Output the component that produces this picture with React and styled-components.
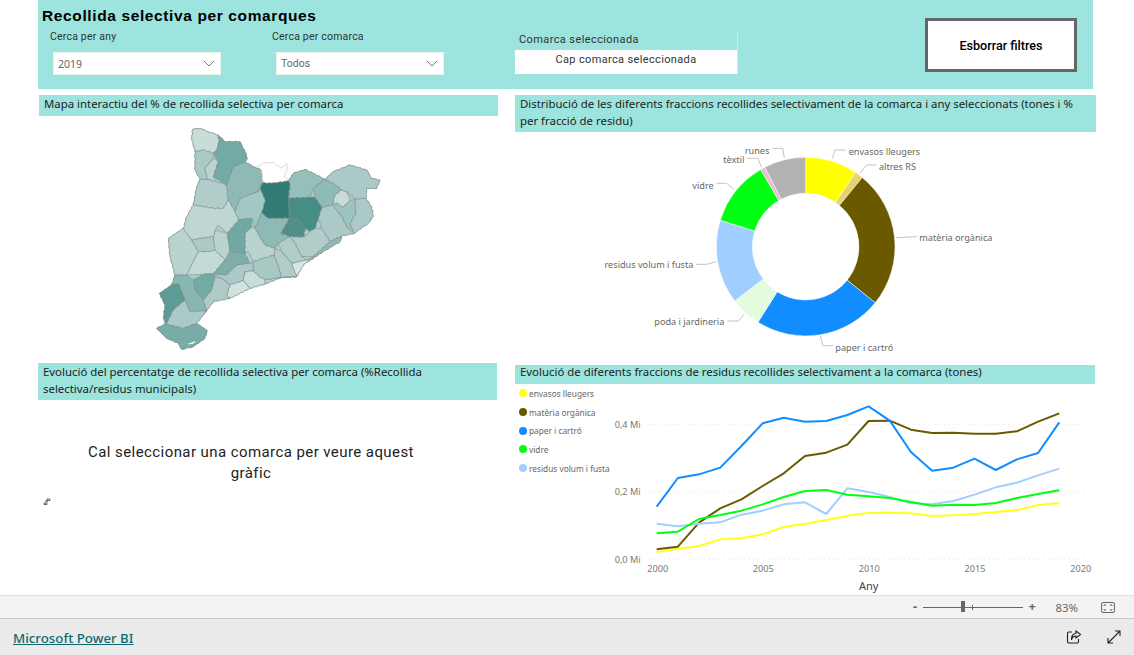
import React from 'react'
import styled, { createGlobalStyle } from 'styled-components'

const GlobalStyle = createGlobalStyle`
  html, body { margin: 0; padding: 0; background: #fff; }
  body { font-family: "Noto Sans", "Open Sans", sans-serif; overflow: hidden; }
`

const TEAL = '#9ce4dd'
const UI_FONT = '"Noto Sans", "Open Sans", sans-serif'
const DIN_FONT = 'Roboto, "Noto Sans", sans-serif'

const Page = styled.div`
  width: 1134px;
  height: 655px;
  display: flex;
  flex-direction: column;
  overflow: hidden;
`

const Canvas = styled.main`
  height: 595px;
  flex: none;
  padding-left: 38px;
  display: grid;
  grid-template-columns: 460px 595px;
  grid-template-rows: 89px 268px 238px;
  box-sizing: border-box;
`

const Banner = styled.header`
  grid-column: 1 / 3;
  background: ${TEAL};
  display: flex;
  flex-direction: column;
  position: relative;
`

const BannerTitle = styled.h1`
  margin: 6px 0 0 4px;
  font: bold 15.5px/20px "Liberation Sans", Arial, sans-serif;
  letter-spacing: 0.62px;
  color: #000;
`

const Filters = styled.div`
  display: flex;
  margin-top: 3px;
`

const Slicer = styled.div`
  width: 222px;
  padding-left: ${p => p.$inset}px;
  box-sizing: border-box;
`

const SlicerLabel = styled.div`
  font: 10.5px/16px ${DIN_FONT};
  letter-spacing: 0.2px;
  color: #333;
  margin-left: ${p => p.$shift}px;
`

const Dropdown = styled.div`
  width: ${p => p.$width}px;
  height: 23px;
  margin-top: 7px;
  background: #fff;
  border: 1px solid #e9f3f1;
  box-sizing: border-box;
  display: flex;
  align-items: center;
  justify-content: space-between;
  padding: 0 5px 0 4px;
  font: 10.5px ${p => p.$din ? DIN_FONT : UI_FONT};
  color: #666;
`

const SelectedCard = styled.div`
  position: absolute;
  left: 477px;
  top: 31px;
  width: 222px;
  border-right: 1px solid #c4ece8;
`

const SelectedLabel = styled.div`
  font: 11px/18px ${DIN_FONT};
  letter-spacing: 0.4px;
  color: #333;
  padding: 0 0 1px 4px;
`

const SelectedValue = styled.div`
  height: 24px;
  padding-bottom: 5px;
  box-sizing: border-box;
  background: #fff;
  font: 11px/19px ${DIN_FONT};
  letter-spacing: 0.35px;
  color: #333;
  text-align: center;
`

const ClearButton = styled.button`
  position: absolute;
  left: 887px;
  top: 18px;
  width: 152px;
  height: 54px;
  box-sizing: border-box;
  background: #fff;
  border: 3px solid #666;
  outline: none;
  padding: 0;
  font: 500 12.6px ${DIN_FONT};
  color: #000;
`

const Panel = styled.section`
  display: flex;
  flex-direction: column;
  min-width: 0;
`

const VisualTitle = styled.h2`
  margin: ${p => p.$top}px 0 0 ${p => p.$left || 0}px;
  width: ${p => p.$width}px;
  height: ${p => p.$height}px;
  flex: none;
  box-sizing: border-box;
  padding: 0 4px 0 5px;
  background: ${TEAL};
  font: 400 11.4px/${p => p.$lead || 17}px ${UI_FONT};
  color: #222;
`

const MapSvg = styled.svg`
  width: 240px;
  height: 235px;
  margin: 4px 0 0 112px;
  flex: none;
`

const DonutSvg = styled.svg`
  width: 420px;
  height: 225px;
  margin: 3px 0 0 92px;
  flex: none;
  text { font-family: ${UI_FONT}; font-size: 27.4px; fill: #666; }
  polyline { fill: none; stroke: #c4c4c4; stroke-width: 3; }
`

const Notice = styled.div`
  width: 340px;
  margin: 42px 0 0 43px;
  font: 15px/21px ${DIN_FONT};
  letter-spacing: 0.42px;
  color: #222;
  text-align: center;
`

const TinyGlyph = styled.svg`
  width: 8px;
  height: 7px;
  margin: 14px 0 0 5px;
  flex: none;
`

const ChartRow = styled.div`
  display: flex;
  height: 212px;
  padding-left: 17px;
`

const Legend = styled.ul`
  list-style: none;
  margin: 0;
  padding: 0 0 0 4px;
  width: 91px;
  flex: none;
`

const LegendItem = styled.li`
  height: 18.7px;
  display: flex;
  align-items: center;
  font: 8.3px ${UI_FONT};
  color: #666;
  white-space: nowrap;
`

const Dot = styled.span`
  width: 8px;
  height: 8px;
  border-radius: 50%;
  background: ${p => p.$color};
  margin-right: 2px;
  flex: none;
`

const LineSvg = styled.svg`
  width: 486px;
  height: 212px;
  flex: none;
  text { font-family: ${UI_FONT}; font-size: 27.5px; fill: #777; }
`

const ZoomBar = styled.div`
  height: 24px;
  flex: none;
  box-sizing: border-box;
  background: #f3f3f3;
  border-top: 1px solid #e2e2e2;
  border-bottom: 1px solid #c8c8c8;
  display: flex;
  align-items: center;
  justify-content: flex-end;
  padding-right: 19px;
  color: #666;
`

const ZoomSign = styled.span`
  font: bold 13px/14px ${UI_FONT};
  color: #666;
  width: 7px;
  text-align: center;
  margin-top: -2px;
`

const Slider = styled.div`
  position: relative;
  width: 100px;
  height: 1px;
  margin: 0 6px 0 4px;
  background: #666;
`

const Thumb = styled.i`
  position: absolute;
  left: 38px;
  top: -6px;
  width: 4px;
  height: 11px;
  background: #666;
`

const Tick = styled.i`
  position: absolute;
  left: 49px;
  top: -2px;
  width: 1px;
  height: 5px;
  background: #666;
`

const Percent = styled.span`
  font: 11.4px ${UI_FONT};
  color: #666;
  margin: 0 23px 0 20px;
`

const Footer = styled.footer`
  flex: 1;
  background: #eaeaea;
  display: flex;
  align-items: center;
  padding: 2px 12px 0 13px;
`

const BrandLink = styled.a`
  font: 500 13.3px ${UI_FONT};
  color: #0b6a70;
  text-decoration: underline;
  flex: 1;
`

const FooterIcon = styled.svg`
  width: 16px;
  height: 16px;
  margin: -2px 0 0 ${p => p.$gap || 0}px;
  flex: none;
`

const outline = '128,28 150,25 175,35 205,45 225,65 270,65 285,95 292,115 285,125 320,145 335,150 338,188 365,190 415,183 430,160 465,148 490,160 525,178 550,155 600,135 650,150 665,175 690,180 680,205 650,205 648,235 665,260 670,290 655,310 612,340 575,348 570,365 520,395 475,425 462,432 440,470 395,472 345,492 300,505 240,535 190,545 160,585 140,610 172,632 165,655 130,680 95,688 85,670 50,655 20,625 45,612 40,595 45,555 28,520 65,495 75,465 60,410 55,355 100,325 110,290 130,255 140,200 150,178 135,150 135,95 125,55'

const comarques = [
  ['#c8dcd8', '128,28 150,25 175,35 205,45 207,65 200,90 190,100 160,90 135,95 125,55'],
  ['#a9cac6', '135,95 160,90 190,100 190,115 165,145 172,178 150,178 135,150'],
  ['#bad5d1', '190,115 205,125 190,170 200,185 172,178 165,145'],
  ['#72aaa5', '205,45 225,65 270,65 285,95 292,115 285,125 250,140 230,195 190,170 205,125 190,100 200,90 207,65'],
  ['#b0cdc9', '150,178 172,178 200,185 230,195 235,240 220,265 190,265 130,255 140,200'],
  ['#8fb9b5', '285,125 320,145 335,150 338,188 328,205 325,215 270,235 255,275 235,240 230,195 250,140'],
  ['#ffffff', '320,140 345,128 370,128 395,145 410,130 412,145 403,170 415,183 365,190 338,188 335,150'],
  ['#96beba', '430,160 465,148 490,160 525,178 490,205 480,232 415,235 420,195 415,183'],
  ['#abcac7', '525,178 550,155 600,135 650,150 665,175 690,180 680,205 650,205 648,235 615,238 590,215 575,210 550,190'],
  ['#8fbab6', '490,205 525,178 550,190 575,210 555,225 548,255 515,262 495,232'],
  ['#c8dcd8', '555,225 575,210 590,215 600,240 580,262 560,250 548,255'],
  ['#9dc3bf', '548,255 560,250 580,262 600,240 615,238 617,280 600,310 612,340 590,320 575,290'],
  ['#abcac7', '615,238 648,235 665,260 670,290 655,310 612,340 600,310 617,280'],
  ['#abcac7', '515,262 548,255 575,290 590,320 612,340 575,348 540,365 515,325 505,295'],
  ['#478d85', '415,235 480,232 495,232 515,262 505,295 495,325 480,335 465,325 445,300 418,295'],
  ['#317c74', '330,205 338,188 365,190 415,183 420,195 415,235 418,295 385,295 355,295 335,280 345,240'],
  ['#4f8f88', '418,295 445,300 465,325 462,352 420,350 392,340'],
  ['#a3c7c3', '270,235 325,215 330,205 345,240 335,280 315,325 305,295 265,300 255,275'],
  ['#8fb9b5', '335,280 355,295 385,295 418,295 392,340 420,350 385,370 375,385 345,375 325,345 315,325'],
  ['#b0cdc9', '462,352 480,335 495,325 515,325 540,365 490,410 455,410 435,370 420,350'],
  ['#8fbab6', '540,365 575,348 570,365 520,395 475,425 470,420 490,410'],
  ['#b0cdc9', '385,370 420,350 435,370 455,410 470,420 425,430 395,395'],
  ['#d9e7e4', '425,430 470,420 475,425 462,432 440,470 430,445'],
  ['#b0cdc9', '375,385 395,395 425,430 430,445 440,470 395,472 385,440 372,405'],
  ['#b9d3d0', '285,340 305,320 315,325 325,345 345,375 375,385 372,405 340,415 310,425 295,395 285,400'],
  ['#b9d3cf', '55,355 100,325 125,360 145,395 110,465 75,465 60,410'],
  ['#abcac7', '145,355 190,350 195,390 180,395 145,395 125,360'],
  ['#b9d3d0', '195,330 232,340 240,395 225,420 195,390 190,350'],
  ['#6fa8a3', '240,330 265,300 305,295 305,320 285,340 285,400 240,395 232,340'],
  ['#c4dad6', '110,465 145,395 180,395 195,390 225,420 190,462'],
  ['#bfd7d3', '110,290 130,255 190,265 220,265 235,240 255,275 265,300 240,330 232,340 205,315 195,330 190,350 145,355 125,360 100,325'],
  ['#7daea9', '240,395 285,400 300,430 260,435 230,465 190,462 225,420'],
  ['#abcac7', '300,430 310,425 310,452 285,455 280,482 240,495 220,478 190,462 230,465 260,435'],
  ['#a8c8c4', '310,425 340,415 372,405 385,440 395,472 345,480 330,472 310,452'],
  ['#c8dcd8', '285,455 310,452 330,472 345,480 345,492 300,505 280,482'],
  ['#b9d3d0', '345,480 395,472 440,470 395,472 345,492'],
  ['#d2e2df', '240,495 280,482 300,505 240,535 230,525'],
  ['#72aaa5', '130,480 165,460 190,462 195,470 185,510 160,540 135,510'],
  ['#8ab6b2', '75,465 110,465 130,480 135,510 160,540 170,572 120,575 105,540 85,490 65,495'],
  ['#aecbc7', '195,470 220,478 240,495 230,525 240,535 190,545 160,585 170,572 160,540 185,510'],
  ['#5d9c95', '65,495 85,490 105,540 70,570 50,610 40,595 45,555 28,520'],
  ['#abcac7', '70,570 105,540 120,575 170,572 160,585 140,610 100,625 45,612 50,610'],
  ['#77aca7', '20,625 45,612 100,625 140,610 172,632 165,655 130,680 95,688 85,670 50,655'],
]

// wiggle the straight edges a little; shared edges wiggle the same way
const roughen = points => {
  const pts = points.split(' ').map(p => p.split(',').map(Number))
  const out = []
  pts.forEach((a, i) => {
    const b = pts[(i + 1) % pts.length]
    const flip = a[0] > b[0] || (a[0] === b[0] && a[1] > b[1])
    const [p, q] = flip ? [b, a] : [a, b]
    const len = Math.hypot(q[0] - p[0], q[1] - p[1])
    const n = Math.max(1, Math.floor(len / 6))
    const seed = p[0] * 12.9 + p[1] * 78.2 + q[0] * 37.7 + q[1] * 11.3
    out.push(a.join(','))
    for (let k = 1; k < n; k++) {
      const t = flip ? 1 - k / n : k / n
      const off = Math.sin(seed + t * n * 2.4) * 1.3
      const x = p[0] + (q[0] - p[0]) * t - ((q[1] - p[1]) / len) * off
      const y = p[1] + (q[1] - p[1]) * t + ((q[0] - p[0]) / len) * off
      out.push(`${x.toFixed(1)},${y.toFixed(1)}`)
    }
  })
  return out.join(' ')
}

const slices = [
  ['#ffff00', 0, 34],
  ['#e6d26e', 34, 39.3],
  ['#6b5900', 39.3, 128.9],
  ['#118dff', 128.9, 212.3],
  ['#e3fcdc', 212.3, 232.6],
  ['#a0cfff', 232.6, 287.2],
  ['#00ff12', 287.2, 329.8],
  ['#f2b6dc', 329.8, 332.8],
  ['#b3b3b3', 332.8, 360],
]

const donutLabels = [
  ['envasos lleugers', 776, 50, 'start', '727,70 735,45 768,45'],
  ['altres RS', 867, 95, 'start', '810,115 830,90 860,90'],
  ['matèria orgànica', 988, 308, 'start', '918,308 980,305'],
  ['paper i cartró', 736, 636, 'start', '692,603 698,632 730,632'],
  ['poda i jardineria', 403, 560, 'end', '462,538 445,558 412,558'],
  ['residus volum i fusta', 310, 388, 'end', '378,380 350,388 318,388'],
  ['vidre', 371, 150, 'end', '432,163 410,145 380,145'],
  ['tèxtil', 463, 72, 'end', '515,97 503,70 472,70'],
  ['runes', 538, 45, 'end', '583,68 578,40 548,40'],
]

const series = [
  ['#ffff1a', 'envasos lleugers', [576, 566, 558, 538, 535, 523, 501, 491, 480, 467, 459, 458, 460, 468, 466, 462, 456, 450, 435, 429]],
  ['#6b5900', 'matèria orgànica', [568, 560, 488, 445, 418, 378, 340, 288, 278, 254, 183, 182, 209, 219, 218, 221, 221, 214, 185, 160]],
  ['#118dff', 'paper i cartró', [440, 354, 343, 323, 258, 190, 173, 185, 183, 165, 139, 182, 276, 332, 323, 296, 330, 298, 279, 187]],
  ['#a0cfff', 'residus volum i fusta', [491, 499, 491, 487, 464, 452, 433, 427, 462, 385, 396, 411, 430, 433, 423, 404, 382, 368, 346, 326]],
  ['#00ff12', 'vidre', [520, 515, 477, 465, 452, 433, 411, 393, 390, 404, 409, 414, 426, 437, 434, 435, 429, 414, 402, 391]],
]

const legendOrder = [0, 1, 2, 4, 3]

// ring segment, angles in degrees clockwise from the top
const ringPath = (from, to, cx = 647, cy = 335, R = 268, r = 160) => {
  const pt = (rad, deg) => {
    const a = (deg * Math.PI) / 180
    return `${(cx + rad * Math.sin(a)).toFixed(1)} ${(cy - rad * Math.cos(a)).toFixed(1)}`
  }
  const big = to - from > 180 ? 1 : 0
  return `M${pt(R, from)} A${R} ${R} 0 ${big} 1 ${pt(R, to)} L${pt(r, to)} A${r} ${r} 0 ${big} 0 ${pt(r, from)} Z`
}

const Chevron = () => (
  <svg width="12" height="7" viewBox="0 0 12 7" fill="none" stroke="#777" strokeWidth="1">
    <path d="M.8.8 6 6 11.2.8" />
  </svg>
)

const CatalunyaMap = () => (
  <MapSvg viewBox="0 0 720 705">
    <defs>
      <filter id="soft"><feGaussianBlur stdDeviation="0.9" /></filter>
    </defs>
    <g filter="url(#soft)">
      <polygon points={roughen(outline)} fill="#b0cdc9" stroke="#7d8b88" strokeWidth="1.7" />
      {comarques.map(([fill, points], i) => (
        <polygon key={i} points={roughen(points)} fill={fill} stroke={fill === '#ffffff' ? '#bdbdbd' : '#7d8b88'} strokeWidth="1.7" strokeLinejoin="round" />
      ))}
      <path d="M112 672q14-4 25-9-6 12-25 9Z" fill="#fff" />
    </g>
  </MapSvg>
)

const FractionDonut = () => (
  <DonutSvg viewBox="0 0 1260 675">
    {slices.map(([fill, from, to]) => (
      <path key={fill} d={ringPath(from, to)} fill={fill} stroke="#fff" strokeWidth="1.5" />
    ))}
    {donutLabels.map(([label, x, y, anchor, line]) => (
      <g key={label}>
        <polyline points={line} />
        <text x={x} y={y} textAnchor={anchor} dominantBaseline="central">{label}</text>
      </g>
    ))}
  </DonutSvg>
)

const TrendChart = () => (
  <LineSvg viewBox="300 72 1458 636">
    {[193, 395, 597].map((y, i) => (
      <g key={y}>
        <line x1="416" x2="1730" y1={y} y2={y} stroke="#ddd" strokeWidth="3" strokeDasharray="3 12" />
        <text x="392" y={y} textAnchor="end" dominantBaseline="central">{['0,4 Mi', '0,2 Mi', '0,0 Mi'][i]}</text>
      </g>
    ))}
    {[[443, 2000], [760, 2005], [1078, 2010], [1395, 2015], [1712, 2020]].map(([x, year]) => (
      <text key={year} x={x} y="626" textAnchor="middle" dominantBaseline="central">{year}</text>
    ))}
    <text x="1076" y="676" textAnchor="middle" dominantBaseline="central" style={{ fill: '#444', fontSize: 33 }}>Any</text>
    {series.map(([color, name, ys]) => (
      <polyline
        key={name}
        points={ys.map((y, i) => `${(440 + 63.57 * i).toFixed(1)},${y}`).join(' ')}
        fill="none"
        stroke={color}
        strokeWidth="6"
        strokeLinejoin="round"
      />
    ))}
  </LineSvg>
)

export default function App() {
  return (
    <Page>
      <GlobalStyle />
      <Canvas>
        <Banner>
          <BannerTitle>Recollida selectiva per comarques</BannerTitle>
          <Filters>
            <Slicer $inset={15}>
              <SlicerLabel $shift={-3}>Cerca per any</SlicerLabel>
              <Dropdown $width={168}>2019<Chevron /></Dropdown>
            </Slicer>
            <Slicer $inset={16}>
              <SlicerLabel $shift={-4}>Cerca per comarca</SlicerLabel>
              <Dropdown $width={168} $din>Todos<Chevron /></Dropdown>
            </Slicer>
          </Filters>
          <SelectedCard>
            <SelectedLabel>Comarca seleccionada</SelectedLabel>
            <SelectedValue>Cap comarca seleccionada</SelectedValue>
          </SelectedCard>
          <ClearButton>Esborrar filtres</ClearButton>
        </Banner>

        <Panel>
          <VisualTitle $width={459} $height={21} $top={6} $left={1}>Mapa interactiu del % de recollida selectiva per comarca</VisualTitle>
          <CatalunyaMap />
        </Panel>
        <Panel>
          <VisualTitle $width={581} $height={37} $top={6} $left={17}>Distribució de les diferents fraccions recollides selectivament de la comarca i any seleccionats (tones i % per fracció de residu)</VisualTitle>
          <FractionDonut />
        </Panel>

        <Panel>
          <VisualTitle $width={459} $height={37} $top={6}>Evolució del percentatge de recollida selectiva per comarca (%Recollida selectiva/residus municipals)</VisualTitle>
          <Notice>Cal seleccionar una comarca per veure aquest gràfic</Notice>
          <TinyGlyph viewBox="0 0 8 7" fill="none" stroke="#666" strokeWidth="1">
            <path d="M1 5h3v1.5H1zM4 1h3v1.5H4zM2.5 5 5.5 2.5M2 3h2" />
          </TinyGlyph>
        </Panel>
        <Panel>
          <VisualTitle $width={580} $height={19} $top={8} $left={17} $lead={14}>Evolució de diferents fraccions de residus recollides selectivament a la comarca (tones)</VisualTitle>
          <ChartRow>
            <Legend>
              {legendOrder.map(i => (
                <LegendItem key={series[i][1]}><Dot $color={series[i][0]} />{series[i][1]}</LegendItem>
              ))}
            </Legend>
            <TrendChart />
          </ChartRow>
        </Panel>
      </Canvas>

      <ZoomBar>
        <ZoomSign>-</ZoomSign>
        <Slider><Thumb /><Tick /></Slider>
        <ZoomSign>+</ZoomSign>
        <Percent>83%</Percent>
        <svg width="14" height="11" viewBox="0 0 14 11" fill="none" stroke="#666" strokeWidth="1">
          <rect x=".5" y=".5" width="13" height="10" rx="1.5" />
          <path d="M3 4V3h2M9 3h2v1M11 7v1H9M5 8H3V7" />
        </svg>
      </ZoomBar>
      <Footer>
        <BrandLink href="#">Microsoft Power BI</BrandLink>
        <FooterIcon viewBox="0 0 16 16" fill="none" stroke="#222" strokeWidth="1.1">
          <path d="M6 3H3a1.5 1.5 0 0 0-1.5 1.5v8A1.5 1.5 0 0 0 3 14h8a1.5 1.5 0 0 0 1.5-1.5V10" />
          <path d="M10 2l4.5 3.5L10 9V7C7.5 7 6 8.5 5.5 11 5 7.5 7 4.5 10 4.2Z" />
        </FooterIcon>
        <FooterIcon $gap={24} viewBox="0 0 16 16" fill="none" stroke="#222" strokeWidth="1.1">
          <path d="M2 14 14 2M9 2h5v5M2 9v5h5" />
        </FooterIcon>
      </Footer>
    </Page>
  )
}
